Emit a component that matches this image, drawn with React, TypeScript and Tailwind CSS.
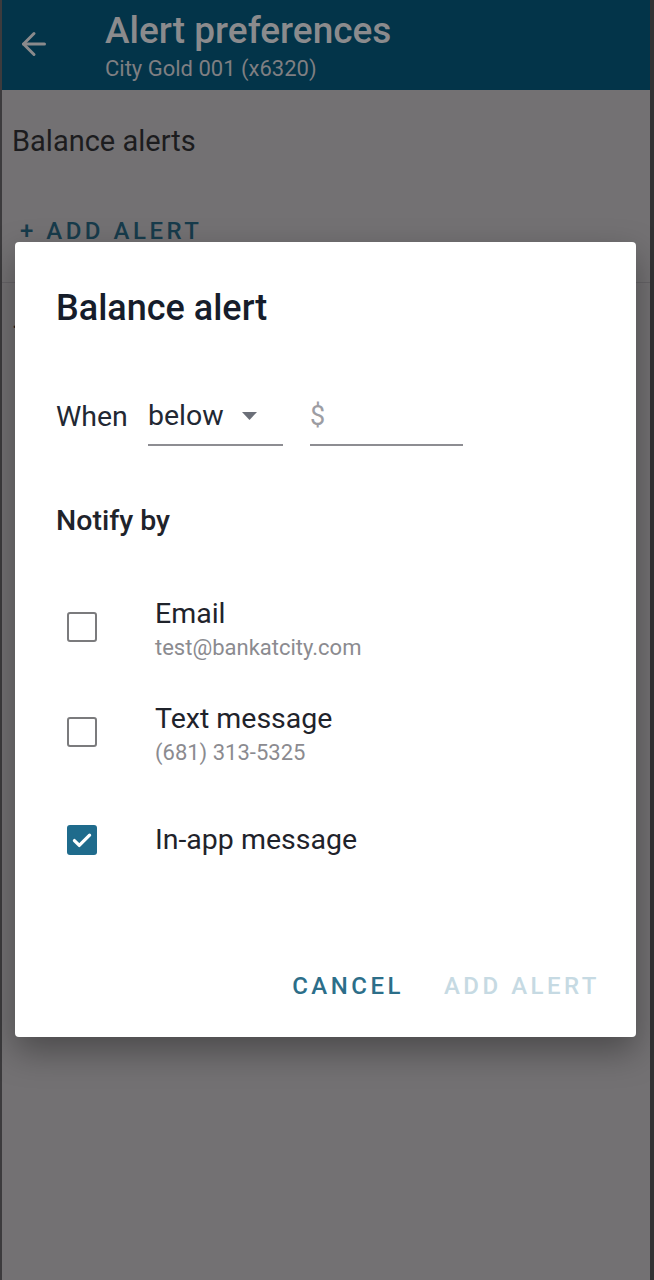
import { ArrowLeft } from "lucide-react";

const font = { fontFamily: "Roboto, 'Noto Sans', Arial, sans-serif" };

function Checkbox({ checked }: { checked?: boolean }) {
  if (checked) {
    return (
      <div className="w-[30px] h-[30px] rounded-[3px] bg-[#1f6b8c] flex items-center justify-center shrink-0">
        <svg width="26" height="26" viewBox="0 0 24 24" fill="none">
          <path d="M5 12.5l4.5 4.5L19 7.5" stroke="white" strokeWidth="3" strokeLinecap="round" strokeLinejoin="round" />
        </svg>
      </div>
    );
  }
  return <div className="w-[30px] h-[30px] rounded-[3px] border-[2.5px] border-[#7b7b7d] shrink-0" />;
}

function NotifyRow({ label, sub, checked, className }: { label: string; sub?: string; checked?: boolean; className: string }) {
  return (
    <div className={`flex ${sub ? "items-start" : "items-center"} pl-[52px] ${className}`}>
      <div className={sub ? "mt-[14px]" : ""}>
        <Checkbox checked={checked} />
      </div>
      <div className="ml-[58px] flex flex-col">
        <span className="text-[28.5px] leading-[32px] text-[#1f232b]">{label}</span>
        {sub && <span className="text-[22px] leading-[30px] mt-[3px] text-[#8b8b90]">{sub}</span>}
      </div>
    </div>
  );
}

export default function App() {
  return (
    <div className="relative w-[654px] h-[1280px] flex bg-[#737173] overflow-hidden" style={font}>
      <div className="w-[2px] bg-[#3c3b3d]" />
      <div className="flex-1 flex flex-col">
        <header className="h-[90px] bg-[#033449] flex">
          <div className="w-[103px] flex items-start pl-[14px] pt-[26px]">
            <ArrowLeft size={36} strokeWidth={2} color="#8a8a8c" />
          </div>
          <div className="flex flex-col pt-[10px]">
            <span className="text-[37px] leading-[42px] font-medium text-[#8b8b8d]">Alert preferences</span>
            <span className="text-[22px] leading-[26px] mt-[4px] text-[#7f7f82]">City Gold 001 (x6320)</span>
          </div>
        </header>
        <div className="pl-[10px] mt-[34px] text-[29px] leading-[34px] text-[#1c1c1e]">Balance alerts</div>
        <div className="pl-[18px] mt-[59px] text-[24px] leading-[28px] font-medium tracking-[3.5px] text-[#173b4b]">+ ADD ALERT</div>
        <div className="mt-[37px] border-t border-[#666467]" />
        <div className="pl-[10px] mt-[30px] text-[24px] leading-[28px] text-[#1c1c1e]">·</div>
      </div>
      <div className="w-[4px] bg-[#333234]" />

      <div className="absolute left-[15px] top-[242px] w-[621px] h-[795px] bg-white rounded-[4px] shadow-[0_14px_34px_rgba(0,0,0,0.35)] flex flex-col">
        <div className="pl-[41px] pt-[45px] text-[36px] leading-[42px] font-medium text-[#161d2b]">Balance alert</div>

        <div className="flex pl-[41px] mt-[59px] h-[58px]">
          <div className="w-[92px] flex items-center text-[28.5px] text-[#222833]">When</div>
          <div className="w-[135px] flex items-center justify-between border-b-2 border-[#8d8d92] pr-[26px]">
            <span className="text-[28.5px] text-[#222833]">below</span>
            <svg width="15" height="8" viewBox="0 0 15 8">
              <path d="M0 0h15L7.5 8z" fill="#6b6f78" />
            </svg>
          </div>
          <div className="w-[153px] ml-[27px] flex items-center border-b-2 border-[#8d8d92]">
            <span className="text-[27px] text-[#9d9da3]">$</span>
          </div>
        </div>

        <div className="pl-[41px] mt-[58px] text-[28.5px] leading-[34px] font-medium text-[#1f232b]">Notify by</div>

        <NotifyRow className="mt-[60px]" label="Email" sub="test@bankatcity.com" />
        <NotifyRow className="mt-[40px]" label="Text message" sub="(681) 313-5325" />
        <NotifyRow className="mt-[56px]" label="In-app message" checked />

        <div className="mt-auto pb-[37px] pr-[36px] flex justify-end gap-[40px] text-[24px] leading-[28px] font-medium tracking-[3.5px]">
          <span className="text-[#2c6e89]">CANCEL</span>
          <span className="text-[#c6dae3]">ADD ALERT</span>
        </div>
      </div>
    </div>
  );
}
